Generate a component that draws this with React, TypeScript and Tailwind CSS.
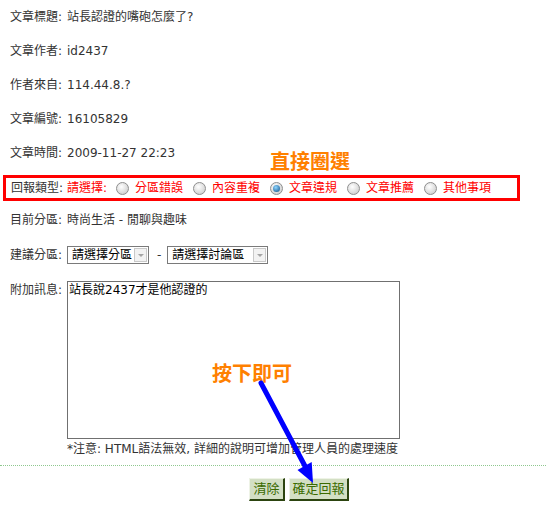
import React from "react";

const infoRows: [string, string][] = [
  ["文章標題:", "站長認證的嘴砲怎麼了?"],
  ["文章作者:", "id2437"],
  ["作者來自:", "114.44.8.?"],
  ["文章編號:", "16105829"],
  ["文章時間:", "2009-11-27 22:23"],
];

const reportTypes = ["分區錯誤", "內容重複", "文章違規", "文章推薦", "其他事項"];

function Radio({ checked }: { checked?: boolean }) {
  return (
    <span className="inline-flex h-[13px] w-[13px] shrink-0 items-center justify-center rounded-full border border-[#8e8e8e] bg-[radial-gradient(circle_at_40%_35%,#ffffff,#c4c4c4)]">
      {checked && (
        <span className="h-[7px] w-[7px] rounded-full bg-[radial-gradient(circle_at_40%_35%,#8fd6ff,#0b4d86)]" />
      )}
    </span>
  );
}

function FakeSelect({ label, width }: { label: string; width: string }) {
  return (
    <span
      className={`inline-flex h-[18px] items-center justify-between border border-[#7a7a7a] bg-white pl-[4px] pr-[1px] ${width}`}
    >
      <span className="text-[12px] leading-[14px] text-black">{label}</span>
      <span className="flex h-[14px] w-[13px] items-center justify-center border border-[#c9c9c9] bg-[#f2f2f2]">
        <span className="h-0 w-0 border-x-[3px] border-t-[3px] border-x-transparent border-t-[#a4a4a4]" />
      </span>
    </span>
  );
}

function GreenButton({ children, width }: { children: React.ReactNode; width: string }) {
  return (
    <button
      className={`h-[23px] ${width} border-t border-l border-r-2 border-b-2 border-t-[#eef3e6] border-l-[#eef3e6] border-r-[#2c4410] border-b-[#2c4410] bg-[#d3dfc4] text-[13px] leading-[14px] text-[#3b6b00]`}
    >
      {children}
    </button>
  );
}

export default function App() {
  return (
    <div className="relative h-[508px] w-[546px] overflow-hidden bg-white font-['DejaVu_Sans','Noto_Sans_CJK_TC',sans-serif] text-[12px] leading-[14px] text-[#333333]">
      {infoRows.map(([label, value]) => (
        <div key={label} className="flex h-[34px] items-center pl-[10px]">
          <span className="w-[57px] shrink-0">{label}</span>
          <span>{value}</span>
        </div>
      ))}

      {/* report type, boxed in red */}
      <div className="ml-[3px] mt-[5px] flex h-[26px] w-[517px] items-center border-[3px] border-[#ff0000] pl-[5px]">
        <span className="w-[56px] shrink-0">回報類型:</span>
        <span className="text-[#ff0000]">請選擇:</span>
        {reportTypes.map((t, i) => (
          <span key={t} className={`flex items-center ${i === 0 ? "ml-[9px]" : "ml-[10px]"}`}>
            <Radio checked={i === 2} />
            <span className="ml-[6px] text-[#ff0000]">{t}</span>
          </span>
        ))}
      </div>

      <div className="flex h-[38px] items-center pl-[10px]">
        <span className="w-[57px] shrink-0">目前分區:</span>
        <span>時尚生活 - 閒聊與趣味</span>
      </div>

      <div className="flex h-[32px] items-center pl-[10px]">
        <span className="w-[57px] shrink-0">建議分區:</span>
        <FakeSelect label="請選擇分區" width="w-[82px]" />
        <span className="ml-[8px] mr-[6px]">-</span>
        <FakeSelect label="請選擇討論區" width="w-[101px]" />
      </div>

      <div className="mt-[10px] flex pl-[10px]">
        <span className="w-[57px] shrink-0 pt-[2px]">附加訊息:</span>
        <div className="flex flex-col">
          <textarea
            readOnly
            defaultValue="站長說2437才是他認證的"
            className="h-[158px] w-[333px] resize-none border border-[#707070] p-[1px] font-['DejaVu_Sans','Noto_Sans_CJK_TC',sans-serif] text-[12px] leading-[14px] text-black outline-none"
          />
          <span className="mt-[3px] whitespace-nowrap">*注意: HTML語法無效, 詳細的說明可增加管理人員的處理速度</span>
        </div>
      </div>

      <div className="mt-[9px] border-t border-dotted border-[#8fc88f]" />

      <div className="mt-[12px] flex gap-[4px] pl-[249px]">
        <GreenButton width="w-[36px]">清除</GreenButton>
        <GreenButton width="w-[60px]">確定回報</GreenButton>
      </div>

      {/* annotations */}
      <span className="absolute left-[270px] top-[152px] text-[20px] font-bold leading-[21px] text-[#ff8000]">直接圈選</span>
      <span className="absolute left-[212px] top-[364px] text-[20px] font-bold leading-[21px] text-[#ff8000]">按下即可</span>
      <svg className="pointer-events-none absolute left-0 top-0" width="546" height="508" viewBox="0 0 546 508">
        <line x1="261" y1="383" x2="306" y2="468" stroke="#0000ff" strokeWidth="5" strokeLinecap="round" />
        <polygon points="313,483 311.7,462 297.5,470" fill="#0000ff" />
      </svg>
    </div>
  );
}
